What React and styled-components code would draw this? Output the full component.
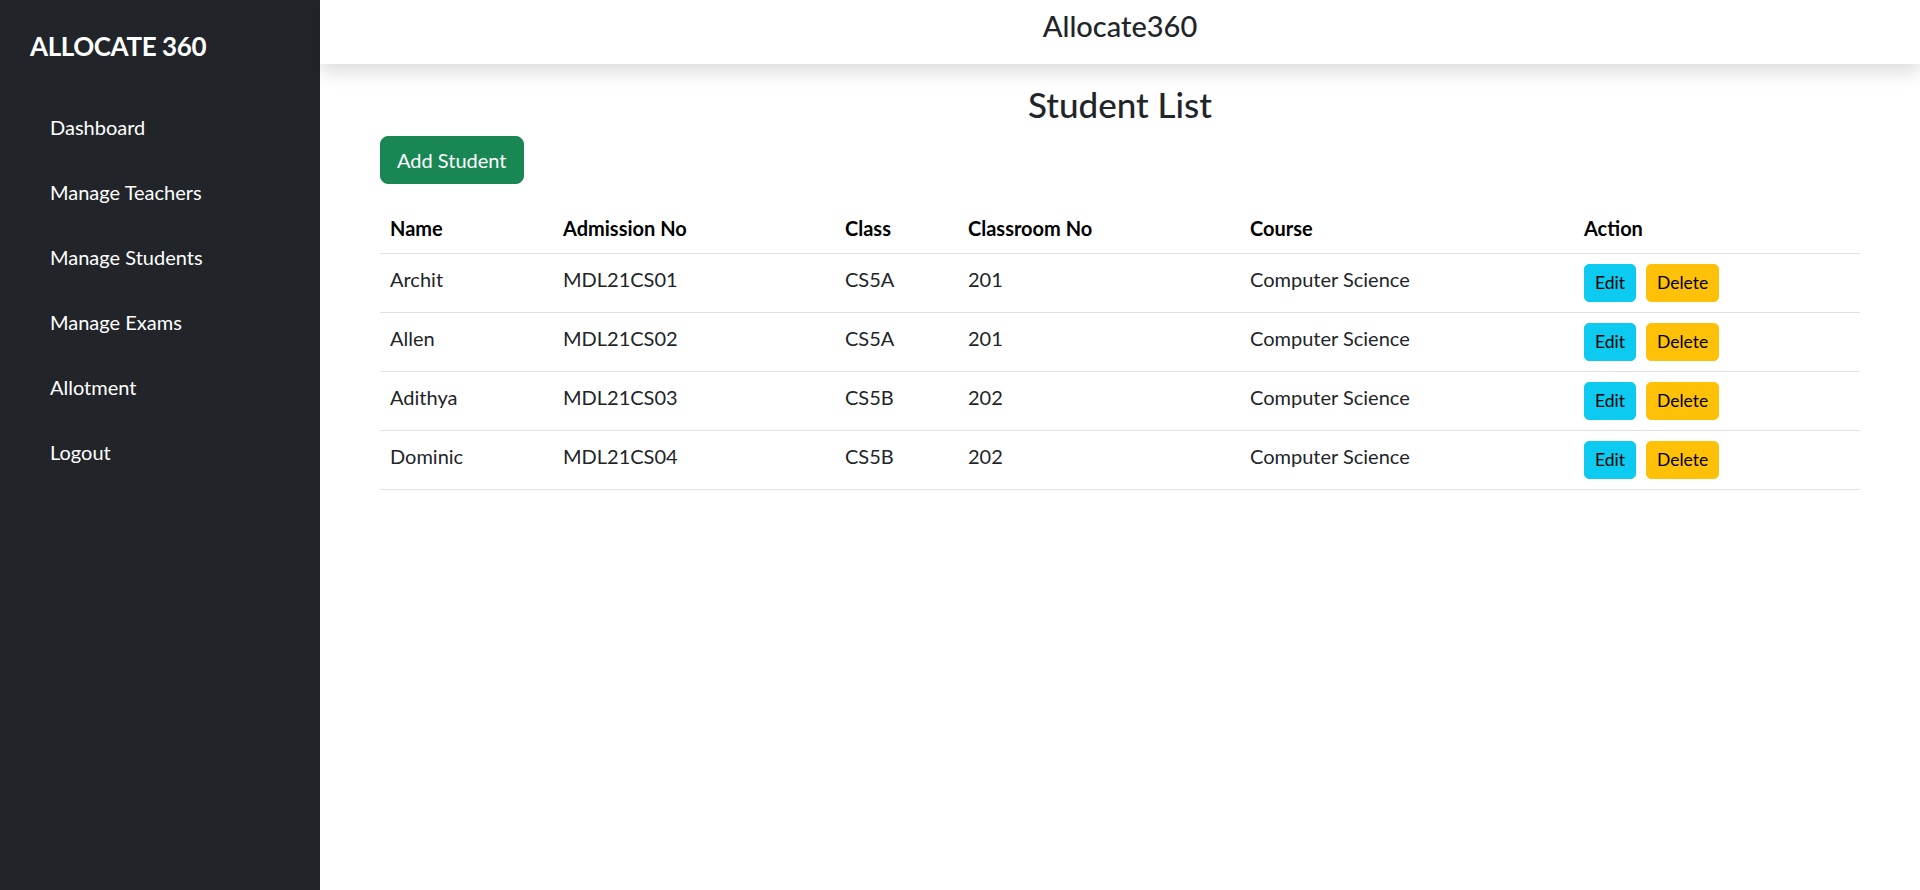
import React from "react";
import styled, { createGlobalStyle } from "styled-components";

const GlobalStyle = createGlobalStyle`
  *, *::before, *::after { box-sizing: border-box; }
  html, body { margin: 0; padding: 0; height: 100%; }
  body {
    font-family: Lato, "Noto Sans", "Liberation Sans", sans-serif;
    color: #212529;
    background: #ffffff;
    font-size: 20px;
    line-height: 1.5;
  }
  #root { height: 100%; }
`;

const Layout = styled.div`
  display: flex;
  width: 100%;
  height: 890px;
  overflow: hidden;
`;

const Sidebar = styled.aside`
  flex: 0 0 320px;
  width: 320px;
  background: #212529;
  color: #ffffff;
  padding: 30px 30px;
  display: flex;
  flex-direction: column;
`;

const Brand = styled.h3`
  margin: 0 0 40px;
  font-size: 26px;
  font-weight: 700;
  line-height: 32px;
  letter-spacing: -0.4px;
`;

const NavList = styled.nav`
  display: flex;
  flex-direction: column;
  gap: 15px;
`;

const NavLink = styled.a`
  display: block;
  padding: 10px 20px;
  color: #ffffff;
  text-decoration: none;
  font-size: 20px;
  line-height: 30px;
  cursor: pointer;
`;

const Main = styled.main`
  flex: 1;
  display: flex;
  flex-direction: column;
  min-width: 0;
`;

const TopBar = styled.header`
  height: 64px;
  padding-top: 9px;
  text-align: center;
  background: #ffffff;
  box-shadow: 0 8px 18px rgba(0, 0, 0, 0.14);
  position: relative;
  z-index: 1;
`;

const TopTitle = styled.div`
  font-size: 29px;
  font-weight: 500;
  line-height: 34px;
`;

const Content = styled.section`
  padding: 20px 60px 0;
`;

const PageTitle = styled.h2`
  margin: 0 0 12px;
  text-align: center;
  font-size: 35px;
  font-weight: 500;
  line-height: 40px;
`;

const Button = styled.button`
  display: inline-block;
  font-family: inherit;
  border: 1px solid ${(p) => p.$bg};
  background: ${(p) => p.$bg};
  color: ${(p) => p.$fg};
  cursor: pointer;
  vertical-align: middle;
  ${(p) =>
    p.$size === "lg"
      ? `font-size: 20px; line-height: 30px; padding: 8px 16px; border-radius: 8px;`
      : `font-size: 17.5px; line-height: 26px; padding: 5px 10px; border-radius: 5px;`}
`;

const Toolbar = styled.div`
  margin-bottom: 19px;
`;

const Table = styled.table`
  width: 100%;
  border-collapse: collapse;
  table-layout: fixed;
  vertical-align: top;
  color: #212529;
`;

const Th = styled.th`
  text-align: left;
  font-weight: 700;
  padding: 10px;
  line-height: 30px;
  border-bottom: 1px solid #dee2e6;
  width: ${(p) => p.$w || "auto"};
  color: #000;
`;

const Td = styled.td`
  padding: 10px;
  line-height: 30px;
  border-bottom: 1px solid #dee2e6;
  vertical-align: top;
`;

const ActionCell = styled(Td)`
  line-height: 38px;
`;

const Actions = styled.div`
  display: flex;
  gap: 10px;
`;

const students = [
  { name: "Archit", adm: "MDL21CS01", cls: "CS5A", room: "201", course: "Computer Science" },
  { name: "Allen", adm: "MDL21CS02", cls: "CS5A", room: "201", course: "Computer Science" },
  { name: "Adithya", adm: "MDL21CS03", cls: "CS5B", room: "202", course: "Computer Science" },
  { name: "Dominic", adm: "MDL21CS04", cls: "CS5B", room: "202", course: "Computer Science" },
];

const navItems = ["Dashboard", "Manage Teachers", "Manage Students", "Manage Exams", "Allotment", "Logout"];

export default function App() {
  return (
    <>
      <GlobalStyle />
      <Layout>
        <Sidebar>
          <Brand>ALLOCATE 360</Brand>
          <NavList>
            {navItems.map((n) => (
              <NavLink key={n}>{n}</NavLink>
            ))}
          </NavList>
        </Sidebar>
        <Main>
          <TopBar>
            <TopTitle>Allocate360</TopTitle>
          </TopBar>
          <Content>
            <PageTitle>Student List</PageTitle>
            <Toolbar>
              <Button $size="lg" $bg="#198754" $fg="#ffffff">Add Student</Button>
            </Toolbar>
            <Table>
              <thead>
                <tr>
                  <Th $w="173px">Name</Th>
                  <Th $w="282px">Admission No</Th>
                  <Th $w="123px">Class</Th>
                  <Th $w="282px">Classroom No</Th>
                  <Th $w="334px">Course</Th>
                  <Th>Action</Th>
                </tr>
              </thead>
              <tbody>
                {students.map((s) => (
                  <tr key={s.adm}>
                    <Td>{s.name}</Td>
                    <Td>{s.adm}</Td>
                    <Td>{s.cls}</Td>
                    <Td>{s.room}</Td>
                    <Td>{s.course}</Td>
                    <ActionCell>
                      <Actions>
                        <Button $bg="#0dcaf0" $fg="#000000">Edit</Button>
                        <Button $bg="#ffc107" $fg="#000000">Delete</Button>
                      </Actions>
                    </ActionCell>
                  </tr>
                ))}
              </tbody>
            </Table>
          </Content>
        </Main>
      </Layout>
    </>
  );
}
